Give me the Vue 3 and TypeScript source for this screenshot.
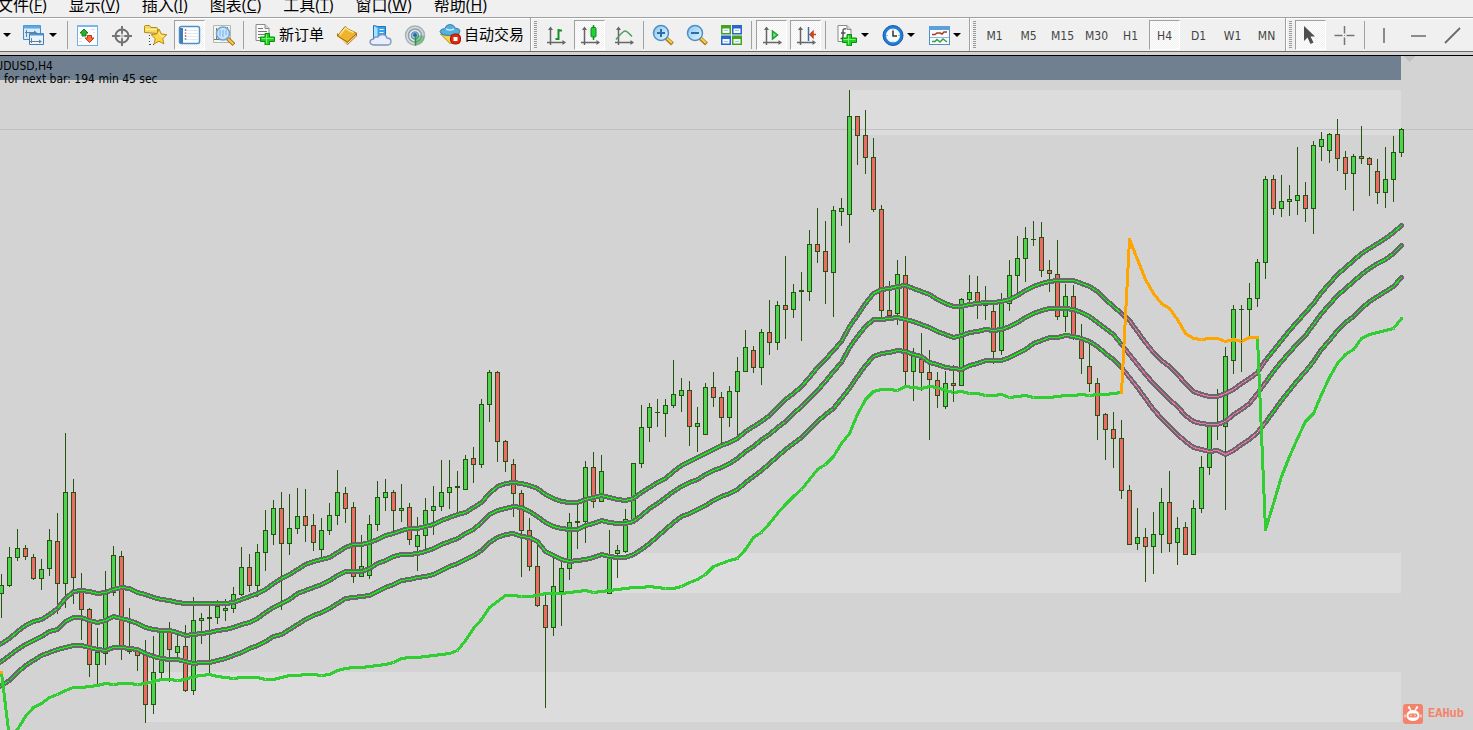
<script setup lang="ts">
interface Candle {
  x: number
  high: number
  top: number
  bottom: number
  low: number
  up: boolean
}

interface Tool {
  icon: string
  label: string
  text?: string
  pressed?: boolean
}

const STEP = 8
const START = 1

const menus = [
  { name: '文件', key: 'F' },
  { name: '显示', key: 'V' },
  { name: '插入', key: 'I' },
  { name: '图表', key: 'C' },
  { name: '工具', key: 'T' },
  { name: '窗口', key: 'W' },
  { name: '帮助', key: 'H' },
]

const axes =
  '<path d="M6.500 4v17M3 18.500h17" stroke="#666" stroke-width="1.500" fill="none"/><path d="M6.500 2.500l2.500 3.500h-5zM22 18.500l-3.500 -2.500v5z" fill="#666"/>'
const plus =
  '<path d="M11 10.500h4.500v3.500h5v4.500h-5v3.500h-4.500v-3.500h-4.500v-4.500h4.500z" fill="#1fd11f" stroke="#0b8a12"/><path d="M12.500 11.500v9M7.500 15.500h12" stroke="#7df070"/>'
const page =
  '<path d="M2 1.500h9l4 4v12h-13z" fill="#fafafa" stroke="#8a8a8a"/><path d="M11 1.500v4h4" fill="#d8d8d8" stroke="#8a8a8a"/>'
const lens =
  '<path d="M14 14l6.500 6" stroke="#a8791c" stroke-width="4"/><path d="M14.500 14l5.500 5" stroke="#f5cf4a" stroke-width="2"/><circle cx="9" cy="9" r="7.500" fill="url(#lensFill)" stroke="#4c8fc4" stroke-width="1.500"/>'

const icons: Record<string, string> = {
  profiles:
    '<path d="M1.500 1.500h17v14h-17z" fill="#d9ecfb" stroke="#4a8cc4"/><path d="M1.500 1.500h17v3h-17z" fill="#5ea7e2"/><path d="M7.500 9.500h14v11h-14z" fill="#eaf5fe" stroke="#3d7fb9"/><path d="M7.500 9.500h14v2h-14z" fill="#4d97d6"/><path d="M4.500 6v7M3 8.500h11M9.500 14v5M8 17.500h11" stroke="#6a7f92" fill="none"/><path d="M12 6.500l3 2l-3 2zM17 15.500l3 2l-3 2z" fill="#6a7f92"/>',
  market:
    '<rect x="1.500" y="1.500" width="20" height="20" fill="#fdfeff" stroke="#6fb1e8"/><path d="M1 2h21" stroke="#77b8ee" stroke-width="2"/><path d="M8 5l4 4h-2v3h-4v-3h-2z" fill="#27b227" stroke="#167a18"/><path d="M11.500 11.500h4v2.500h2.500l-4.500 4.500l-4.500 -4.500h2.500z" fill="#ff6a3c" stroke="#c23a12"/><path d="M3 14.500h3M3 17.500h3M15 5.500h4M17 8.500h2" stroke="#d5dde5"/>',
  cross:
    '<circle cx="12" cy="12" r="6.500" fill="none" stroke="#6c6c6c" stroke-width="2"/><path d="M12 2v8M12 14v8M2 12h8M14 12h8" stroke="#757575" stroke-width="2"/><path d="M12 9v6M9 12h6" stroke="#aaa"/>',
  favorites:
    '<path d="M.500 8.500v-6q0 -1 1 -1h4l1.500 2h5.500q1 0 1 1v5z" fill="#f7d95c" stroke="#b08a1c"/><path d="M1.500 5.500h11" stroke="#fff3b0"/><path d="M5.500 11v10M6 20.500h5" stroke="#444" stroke-dasharray="1 2"/><path d="M15 5l2.400 5l5.400 .7l-4 3.800l1 5.400l-4.800 -2.700l-4.800 2.700l1 -5.400l-4 -3.800l5.400 -.7z" fill="#fbd64a" stroke="#b98a18"/><path d="M15 8.500l1.500 3.500l3.500 .5" fill="none" stroke="#fff2a6"/>',
  navigator:
    '<rect x="1.500" y="2.500" width="20" height="17" rx="2" fill="#fff" stroke="#4f8fc8" stroke-width="1.500"/><path d="M2 4h3v15h-3z" fill="#3f7cb5"/><path d="M8 6.500h12M8 9.500h12M8 12.500h12M8 15.500h12" stroke="#e1e9f4"/><path d="M7.500 5.500v1M7.500 11.500v1M7.500 14.500v1" stroke="#222" stroke-width="1.500"/><path d="M7.500 8.500v1" stroke="#d33" stroke-width="1.500"/>',
  tester:
    '<path d="M1.500 1.500h17v17h-17z" fill="#f4f4f0" stroke="#b9b6ac"/><path d="M4.500 4v11M2 15.500h12M15.500 3v9" stroke="#777"/><path d="M15 14l7 6.500" stroke="#a8791c" stroke-width="4"/><path d="M16 15l5.500 5" stroke="#f5c84a" stroke-width="2"/><circle cx="11" cy="9.500" r="6.500" fill="#c5e3fa" stroke="#6fa6d6" stroke-width="1.500"/><path d="M8 12v-6M11 13v-7M14 11v-5" stroke="#7eaedb"/>',
  order: page + '<path d="M4 5.500h5M4 8.500h9M4 11.500h7M4 14.500h4" stroke="#777"/>' + plus,
  book:
    '<path d="M2 12l10.500 9l9.500 -9v-4l-9 9l-11 -8z" fill="#b8780f"/><path d="M2.500 12l7.500 -9.500q3 3 6 4t5.500 3l-9 8.500z" fill="#eeb42e" stroke="#a56e10"/><path d="M4.500 11l6 -7q4 3.500 8 4.500" fill="none" stroke="#ffe994" stroke-width="1.500"/><path d="M3 13.500l9.500 6l8.500 -8" fill="none" stroke="#fff4cc"/>',
  cloud:
    '<path d="M4.500 1.500l4 1h8v12h-12z" fill="#37a4ee" stroke="#1c75b8"/><path d="M5 2l3.500 2v9l-3.500 1z" fill="#aee0ff"/><path d="M10.500 5.500h4M10.500 8.500h4" stroke="#fff"/><path d="M5 21h13q4 0 4 -3.500t-4 -3.500q-1 -3.500 -4.500 -3.500t-4.500 2.500q-4 -.5 -4.500 2q-3.500 .5 -3.500 3t4 3z" fill="#e8eefb" stroke="#7f93bb" stroke-width="1.300"/>',
  signal:
    '<circle cx="12" cy="11.500" r="9.500" fill="#d9dde0" stroke="#a7b2b4" stroke-width="1.500"/><circle cx="12" cy="11.500" r="6.500" fill="#e7ecee" stroke="#8da2ab" stroke-width="1.500"/><circle cx="12" cy="11.500" r="3.500" fill="#c6d8e6" stroke="#6693ba" stroke-width="1.500"/><path d="M12 11.500v9.500q9 -1 9.500 -9q-3 -1 -9.500 -.5z" fill="#36a946" opacity=".5"/><path d="M12.500 11v10.500" stroke="#2a9336" stroke-width="1.500"/><circle cx="12" cy="11" r="2" fill="#2869a8"/>',
  auto:
    '<path d="M1.500 11q9 3 19 -1l-9 11z" fill="#f8d34c" stroke="#b58b1c"/><path d="M1 8.500q1 4 10 4t10 -4.500q0 -2.500 -5 -3q-1 -3.500 -5 -3.500t-5 4q-5 .5 -5 3z" fill="#56b0dc" stroke="#2f83b1"/><path d="M7 6q4 2 8 0" fill="none" stroke="#c7ecfc" stroke-width="1.500"/><rect x="11.500" y="11" width="10" height="10" rx="4" fill="#dc2a14" stroke="#a31405"/><rect x="14.500" y="14" width="4" height="4" fill="#fff"/>',
  bars: axes + '<path d="M14.500 5v11M14.500 6.500h3.500M11.500 15h3" stroke="#14922a" stroke-width="2" fill="none"/>',
  candles:
    axes + '<path d="M15.500 1v15" stroke="#0b8a1c" stroke-width="1.500"/><rect x="13" y="3.500" width="5" height="9.500" rx="1" fill="#22d03a" stroke="#0b8a1c"/>',
  line: axes + '<path d="M4 15.500q7 -8.500 9 -8.500t7 5.500" stroke="#4b9f58" stroke-width="1.500" fill="none"/>',
  zoomin: lens + '<path d="M9 5v8M5 9h8" stroke="#2a70a6" stroke-width="2"/>',
  zoomout: lens + '<path d="M5 9h8" stroke="#2a70a6" stroke-width="2"/>',
  tiles:
    '<path d="M1 1h10v9.500h-10zM12 11.500h10v9.500h-10z" fill="#43a41c"/><path d="M12 1h10v9.500h-10zM1 11.500h10v9.500h-10z" fill="#2765d0"/><path d="M2.500 4.500h7v4.500h-7zM13.500 4.500h7v4.500h-7zM2.500 15h7v4.500h-7zM13.500 15h7v4.500h-7z" fill="#f6fbff"/><path d="M4 6.500h4M15 6.500h4M4 17.500h4M15 17.500h4" stroke="#a8c5dd"/>',
  scroll: axes + '<path d="M12.500 7l5 4l-5 4z" fill="#7ee08a" stroke="#17a02e" stroke-width="1.500"/>',
  shift:
    axes + '<path d="M14.500 3v14" stroke="#2f75aa" stroke-width="1.500"/><path d="M16 10.500h6M19 7.500l-3 3l3 3z" stroke="#c8441a" stroke-width="1.500" fill="#e0562a"/>',
  indicator:
    page + '<path d="M10 5q-3 -1 -3 2v5q0 3 -2.500 2.500M5 9h4.500" stroke="#555" stroke-width="1.500" fill="none"/>' + plus,
  clock:
    '<circle cx="11" cy="11.500" r="8.500" fill="#f6fafd" stroke="#1f7fd8" stroke-width="3"/><circle cx="11" cy="11.500" r="10" fill="none" stroke="#1459a8"/><path d="M11 6.500v5.500h4" stroke="#333" stroke-width="1.500" fill="none"/><path d="M11 4.500v1M11 17.500v1M4.500 11.500h1M16.500 11.500h1" stroke="#777"/>',
  template:
    '<rect x="1.500" y="2.500" width="20" height="18" fill="#f9fcff" stroke="#4a8fcb"/><path d="M1 2h21v4h-21z" fill="#5aa0dd"/><path d="M2 13.500h19" stroke="#8fb9dc"/><path d="M4 10.500h3l2 -1.500h3l2 1l2 -2h3" stroke="#a63a1c" stroke-width="1.500" fill="none"/><path d="M4 17.500h3l2 -2l3 2.500l3 -3l4 3" stroke="#3c9b45" stroke-width="1.500" fill="none"/>',
  cursor: '<path d="M5 2v15l3.500 -3.500l3 6.500l3 -1.500l-3 -6h4.500z" fill="#4e4e4e"/>',
  aim: '<path d="M11.500 2v7.500M11.500 13.500v7.500M1.500 11.500h8M13.500 11.500h8" stroke="#747474" stroke-width="1.500"/><path d="M11 11.500h1" stroke="#888"/>',
  vline: '<path d="M11 4v15" stroke="#6a6a6a" stroke-width="1.500"/>',
  hline: '<path d="M4 12h15" stroke="#6a6a6a" stroke-width="1.500"/>',
  trend: '<path d="M4 19l15 -15" stroke="#6a6a6a" stroke-width="1.800"/>',
}

const windowTools: Tool[] = [
  { icon: 'market', label: '市场报价' },
  { icon: 'cross', label: '数据窗口' },
  { icon: 'favorites', label: '导航' },
  { icon: 'navigator', label: '终端', pressed: true },
  { icon: 'tester', label: '策略测试' },
]
const tradeTools: Tool[] = [
  { icon: 'order', label: '新订单', text: '新订单' },
  { icon: 'book', label: '编辑器' },
  { icon: 'cloud', label: '云存储' },
  { icon: 'signal', label: '信号' },
  { icon: 'auto', label: '自动交易', text: '自动交易' },
]
const styleTools: Tool[] = [
  { icon: 'bars', label: '柱状图' },
  { icon: 'candles', label: '蜡烛图', pressed: true },
  { icon: 'line', label: '折线图' },
]
const zoomTools: Tool[] = [
  { icon: 'zoomin', label: '放大' },
  { icon: 'zoomout', label: '缩小' },
  { icon: 'tiles', label: '平铺窗口' },
]
const scrollTools: Tool[] = [
  { icon: 'scroll', label: '自动滚动', pressed: true },
  { icon: 'shift', label: '图表平移', pressed: true },
]
const dropTools: Tool[] = [
  { icon: 'indicator', label: '指标' },
  { icon: 'clock', label: '周期' },
  { icon: 'template', label: '模板' },
]
const pointerTools: Tool[] = [
  { icon: 'cursor', label: '光标', pressed: true },
  { icon: 'aim', label: '十字线' },
]
const lineTools: Tool[] = [
  { icon: 'vline', label: '垂直线' },
  { icon: 'hline', label: '水平线' },
  { icon: 'trend', label: '趋势线' },
]
const periods = ['M1', 'M5', 'M15', 'M30', 'H1', 'H4', 'D1', 'W1', 'MN']

// high, body top, body bottom, low, direction
const rows = `574 585 594 618 G;547 557 586 587 G;529 548 558 561 G;545 548 557 560 R;554 557 579 580 R;559 569 579 590 G;529 540 569 576 G;513 541 584 614 R;433 492 584 608 G;479 492 578 604 R
573 592 610 640 R;608 609 665 677 R;628 652 665 684 G;571 593 654 665 G;546 555 593 596 G;551 556 647 660 R;608 651 652 654 G;648 651 656 671 R;640 655 705 723 R;636 672 705 714 G
630 631 673 681 G;622 631 650 682 R;634 646 653 657 G;625 646 691 692 R;597 620 691 695 G;613 618 621 644 G;605 617 619 673 G;600 606 618 624 G;599 608 611 621 G;587 594 609 613 G
547 567 595 596 G;554 567 586 592 R;544 552 586 597 G;510 530 553 571 G;500 508 535 545 G;492 508 544 610 R;494 528 544 555 G;488 516 529 534 G;489 516 526 542 R;514 525 543 551 R
518 530 550 557 G;503 515 531 535 G;470 492 516 525 G;487 493 509 523 R;502 507 577 583 R;535 566 577 577 G;515 524 576 579 G;481 497 525 531 G;479 492 498 511 G;490 492 511 531 R
484 508 511 522 G;503 507 540 545 R;517 535 547 571 G;498 510 536 549 G;486 506 511 535 G;460 492 507 511 G;460 487 493 509 G;471 486 488 513 G;455 459 490 490 G;447 458 465 483 R
399 404 465 468 G;370 372 405 422 G;371 372 442 462 R;440 441 462 472 R;459 464 494 517 R;490 493 531 577 R;518 530 567 571 R;544 566 606 607 R;595 605 628 708 R;556 586 628 636 G
560 568 592 626 G;513 522 569 580 G;505 521 523 549 G;461 467 522 543 G;452 467 502 508 R;455 471 502 502 G;530 555 594 594 G;545 550 554 578 G;509 519 552 553 G;463 463 520 522 G
405 427 464 468 G;403 407 428 442 G;399 412 413 427 G;399 405 414 437 G;360 394 406 408 G;378 390 396 412 G;381 390 427 446 R;407 423 427 452 G;383 387 435 435 G;372 387 398 407 R
392 397 418 443 R;386 391 418 427 G;357 371 392 435 G;330 347 372 372 G;346 350 368 373 R;329 332 368 385 G;300 332 343 355 R;301 305 343 350 G;256 305 310 339 R;284 292 310 318 G
272 290 292 341 G;230 244 292 301 G;208 244 252 263 R;221 251 272 304 R;206 210 273 317 G;198 208 212 226 G;90 116 215 243 G;116 116 136 165 R;110 135 158 174 R;138 157 210 212 R
205 209 311 317 R;281 310 316 317 R;260 274 314 325 G;256 275 372 387 R;348 356 372 401 G;333 359 373 391 R;350 372 380 440 R;372 380 396 408 R;371 383 407 409 G;365 383 386 402 R
298 299 386 386 G;275 292 300 303 G;276 292 304 319 R;286 305 306 320 G;303 311 352 364 R;293 302 351 355 G;260 275 304 311 G;236 258 276 295 G;227 238 259 282 G;221 239 240 246 G
222 237 271 277 R;260 270 274 292 R;240 274 317 320 R;284 296 317 332 G;285 296 336 340 R;324 338 359 374 R;342 366 384 392 R;378 383 416 440 R;413 414 430 460 R;412 429 439 468 R
420 438 491 499 R;485 490 545 545 R;508 537 544 550 G;528 537 547 582 R;512 534 547 574 G;488 502 535 553 G;471 502 544 552 R;517 528 543 565 G;522 527 555 555 R;500 508 555 555 G
456 467 509 513 G;424 426 468 475 G;389 424 425 440 G;347 356 427 510 G;305 309 361 374 G;305 309 310 372 G;283 298 310 337 G;259 262 299 307 G;176 179 263 279 G;175 179 209 215 R
175 201 209 217 G;185 199 202 216 G;147 195 201 215 G;182 195 209 222 R;141 145 209 234 G;132 139 147 161 G;133 134 151 163 G;119 134 159 171 R;151 157 174 190 R;154 156 174 211 G
126 156 159 164 R;157 158 165 196 R;159 171 193 204 R;147 179 193 208 G;136 152 180 202 G;128 129 153 157 G`

const candles: Candle[] = rows.split(/[;\n]/).map((row, i) => {
  const p = row.split(' ')
  return { x: START + i * STEP, high: +p[0], top: +p[1], bottom: +p[2], low: +p[3], up: p[4] === 'G' }
})

const fast = [
  643, 638, 631, 625, 621, 619, 614, 608, 598, 591, 590, 591, 593, 592, 589, 587, 588, 592, 594, 597, 599, 600, 602, 603, 603, 603, 603, 603,
  603, 602, 599, 596, 593, 589, 583, 578, 574, 569, 564, 561, 559, 557, 552, 547, 544, 544, 542, 539, 535, 533, 530, 528, 528, 526, 524, 520,
  517, 514, 512, 507, 502, 493, 486, 483, 482, 483, 485, 488, 494, 498, 501, 502, 502, 499, 497, 495, 497, 499, 500, 498, 492, 487, 482, 478,
  471, 465, 461, 457, 453, 449, 445, 442, 438, 431, 426, 421, 415, 407, 399, 393, 386, 377, 367, 359, 350, 341, 326, 315, 303, 293, 289, 288,
  286, 285, 288, 291, 294, 299, 303, 306, 306, 304, 303, 302, 302, 301, 299, 295, 290, 286, 283, 281, 280, 280, 280, 283, 286, 291, 299, 306,
  313, 320, 331, 342, 352, 360, 366, 374, 383, 391, 394, 396, 396, 393, 389, 383, 378, 372, 360, 350, 340, 330, 321, 312, 303, 292, 283, 274,
  267, 260, 253, 248, 243, 238, 232, 225,
]
const middle = [
  661, 655, 649, 644, 640, 636, 631, 629, 621, 617, 617, 620, 622, 620, 616, 618, 620, 623, 627, 629, 630, 630, 632, 635, 634, 633, 632, 630,
  629, 627, 624, 622, 618, 612, 607, 603, 599, 593, 590, 587, 584, 580, 575, 571, 571, 571, 568, 563, 560, 556, 554, 554, 553, 551, 548, 544,
  541, 538, 533, 529, 522, 514, 510, 508, 506, 507, 511, 516, 522, 526, 528, 529, 529, 525, 523, 520, 522, 523, 523, 521, 515, 508, 503, 497,
  491, 486, 482, 479, 474, 470, 467, 463, 458, 451, 446, 439, 434, 427, 421, 413, 406, 398, 390, 381, 371, 362, 347, 336, 326, 319, 319, 318,
  317, 319, 321, 324, 327, 331, 334, 337, 335, 332, 331, 329, 330, 329, 326, 322, 317, 313, 310, 308, 308, 308, 309, 312, 316, 322, 328, 334,
  344, 354, 364, 374, 383, 391, 399, 406, 415, 421, 423, 424, 424, 421, 414, 409, 403, 393, 382, 371, 361, 352, 343, 335, 324, 313, 304, 295,
  288, 281, 274, 268, 263, 259, 253, 245,
]
const slow = [
  685, 680, 672, 665, 660, 655, 652, 649, 647, 645, 645, 647, 649, 650, 647, 647, 648, 649, 653, 656, 658, 659, 659, 661, 663, 662, 662, 660,
  658, 655, 652, 648, 645, 641, 636, 634, 629, 624, 619, 615, 612, 608, 603, 598, 597, 596, 595, 591, 587, 584, 580, 579, 577, 576, 574, 570,
  566, 563, 559, 555, 550, 542, 537, 534, 533, 536, 537, 541, 551, 555, 559, 561, 560, 559, 557, 554, 556, 557, 557, 554, 549, 543, 536, 529,
  522, 516, 513, 509, 505, 500, 496, 493, 489, 482, 476, 470, 463, 456, 449, 443, 437, 429, 421, 414, 408, 398, 388, 376, 365, 356, 353, 352,
  350, 351, 354, 356, 362, 364, 367, 368, 369, 365, 363, 360, 360, 360, 357, 353, 349, 343, 340, 337, 337, 335, 336, 338, 341, 346, 353, 359,
  367, 377, 387, 398, 409, 418, 426, 434, 441, 447, 449, 451, 450, 454, 450, 444, 439, 432, 422, 411, 400, 390, 380, 371, 361, 349, 340, 330,
  322, 316, 308, 301, 296, 291, 286, 277,
]
const stopEarly = [
  672, 738, 729, 716, 707, 703, 697, 694, 690, 687, 687, 686, 685, 683, 684, 683, 683, 684, 683, 681, 679, 679, 680, 679, 676, 675, 674, 676,
  677, 678, 677, 677, 677, 679, 679, 677, 675, 675, 674, 674, 675, 674, 670, 668, 667, 667, 666, 665, 664, 662, 658, 657, 657, 656, 655, 654,
  653, 650, 640, 628, 619, 607, 601, 595, 595, 596, 596, 595, 593, 593, 593, 592, 591, 590, 592, 591, 590, 589, 588, 587, 587, 586, 587, 588,
  588, 586, 582, 579, 574, 566, 563, 560, 558, 549, 537, 532, 523, 513, 504, 496, 489, 479, 469, 464, 456, 443, 433, 414, 399, 391, 389, 389,
  390, 386, 387, 388, 386, 387, 390, 392, 391, 393, 393, 395, 395, 394, 397, 396, 395, 397, 397, 397, 396, 395, 395, 394, 395, 394, 394, 393,
  392,
]
const stopDown = [392, 239, 259, 279, 293, 303, 308, 319, 333, 338, 339, 338, 338, 341, 339, 341, 337, 337]
const stopLate = [337, 529, 503, 476, 456, 438, 421, 413, 394, 377, 363, 354, 349, 338, 334, 332, 330, 328, 318]

function points(values: number[], first = 0): string {
  return values.map((y, i) => `${START + (first + i) * STEP},${y}`).join(' ')
}

const averages = [fast, middle, slow].map((values) => ({
  all: `-7,${values[0] + 5} ` + points(values),
  falling: points(values.slice(140, 159), 140),
}))
const stopEarlyPoints = points(stopEarly)
const stopDownPoints = points(stopDown, 140)
const stopLatePoints = points(stopLate, 157)
</script>

<template>
  <div class="terminal">
    <svg class="defs" aria-hidden="true">
      <defs>
        <linearGradient id="lensFill" x1="0" y1="0" x2="1" y2="1">
          <stop offset="0" stop-color="#8cc8ef" />
          <stop offset="1" stop-color="#e2f4ff" />
        </linearGradient>
      </defs>
    </svg>
    <nav class="menu">
      <button v-for="m in menus" :key="m.key" type="button">{{ m.name }}(<u>{{ m.key }}</u>)</button>
    </nav>

    <div class="toolbar">
      <button type="button" class="tool stub" aria-label="新图表"><i class="caret"></i></button>
      <button type="button" class="tool profiles" aria-label="配置文件">
        <svg viewBox="0 0 23 22" v-html="icons.profiles"></svg><i class="caret"></i>
      </button>
      <span class="sep"></span>
      <button v-for="t in windowTools" :key="t.icon" type="button" class="tool" :class="{ pressed: t.pressed }" :aria-label="t.label">
        <svg viewBox="0 0 23 22" v-html="icons[t.icon]"></svg>
      </button>
      <span class="sep"></span>
      <button v-for="t in tradeTools" :key="t.icon" type="button" class="tool" :class="{ wide: t.text }" :aria-label="t.label">
        <svg viewBox="0 0 23 22" v-html="icons[t.icon]"></svg><span v-if="t.text">{{ t.text }}</span>
      </button>
      <span class="grip"></span>
      <button v-for="t in styleTools" :key="t.icon" type="button" class="tool" :class="{ pressed: t.pressed }" :aria-label="t.label">
        <svg viewBox="0 0 23 22" v-html="icons[t.icon]"></svg>
      </button>
      <span class="sep"></span>
      <button v-for="t in zoomTools" :key="t.icon" type="button" class="tool" :aria-label="t.label">
        <svg viewBox="0 0 23 22" v-html="icons[t.icon]"></svg>
      </button>
      <span class="sep"></span>
      <button v-for="t in scrollTools" :key="t.icon" type="button" class="tool pressed" :aria-label="t.label">
        <svg viewBox="0 0 23 22" v-html="icons[t.icon]"></svg>
      </button>
      <span class="sep"></span>
      <div class="drops">
        <button v-for="t in dropTools" :key="t.icon" type="button" class="tool drop" :aria-label="t.label">
          <svg viewBox="0 0 23 22" v-html="icons[t.icon]"></svg><i class="caret"></i>
        </button>
      </div>
      <span class="grip"></span>
      <button v-for="p in periods" :key="p" type="button" class="tool period" :class="{ pressed: p === 'H4' }">{{ p }}</button>
      <span class="grip"></span>
      <button v-for="t in pointerTools" :key="t.icon" type="button" class="tool" :class="{ pressed: t.pressed }" :aria-label="t.label">
        <svg viewBox="0 0 23 22" v-html="icons[t.icon]"></svg>
      </button>
      <span class="sep"></span>
      <button v-for="t in lineTools" :key="t.icon" type="button" class="tool" :aria-label="t.label">
        <svg viewBox="0 0 23 22" v-html="icons[t.icon]"></svg>
      </button>
    </div>

    <main class="chart">
      <svg class="plot" viewBox="0 56 1473 674" shape-rendering="crispEdges" role="img" aria-label="AUDUSD H4">
        <rect x="0" y="56" width="1401" height="24" fill="#708090" />
        <rect x="849" y="90" width="552" height="45" fill="#dcdcdc" />
        <rect x="609" y="553" width="792" height="40" fill="#dcdcdc" />
        <rect x="145" y="672" width="1256" height="50" fill="#dcdcdc" />
        <rect x="0" y="129" width="1473" height="1" fill="#c0c0c0" />
        <path d="M1403 56h13l-6.500 6z" fill="#c0c0c0" />
        <g v-for="c in candles" :key="c.x">
          <rect :x="c.x" :y="c.high" width="1" :height="c.low - c.high" fill="#24540f" />
          <rect :x="c.x - 2" :y="c.top" width="5" :height="c.bottom - c.top" fill="#24540f" />
          <rect
            v-if="c.bottom - c.top > 2"
            :x="c.x - 1"
            :y="c.top + 1"
            width="3"
            :height="c.bottom - c.top - 2"
            :fill="c.up ? '#4fd24f' : '#f06868'"
          />
        </g>
        <g fill="none" stroke-linejoin="round" stroke-linecap="round" transform="translate(0.5 0.5)">
          <template v-for="(a, i) in averages" :key="i">
            <polyline :points="a.all" stroke="#696969" stroke-width="5" />
            <polyline :points="a.all" stroke="#00ff00" stroke-width="1" />
            <polyline :points="a.falling" stroke="#696969" stroke-width="3" />
            <polyline :points="a.falling" stroke="#ff69b4" stroke-width="1" />
          </template>
          <polyline :points="stopEarlyPoints" stroke="#32cd32" stroke-width="3" />
          <polyline :points="stopLatePoints" stroke="#32cd32" stroke-width="3" />
          <polyline :points="stopDownPoints" stroke="#ffa500" stroke-width="3" />
          <path d="M-3 672h4" stroke="#ffa500" stroke-width="3" />
        </g>
      </svg>
      <div class="caption">
        <div class="symbol"><span>UDUSD,H4</span></div>
        <div class="timer">for next bar: 194 min 45 sec</div>
      </div>
      <div class="mark">
        <svg viewBox="0 0 20 20">
          <rect width="20" height="20" rx="3" fill="#f5836b" />
          <path d="M6 3l2 4M14 3l-2 4" stroke="#fff" stroke-width="1.500" />
          <circle cx="6" cy="3.500" r="1.200" fill="#fff" />
          <circle cx="14" cy="3.500" r="1.200" fill="#fff" />
          <ellipse cx="10" cy="11.500" rx="6.500" ry="5.500" fill="#fff" />
          <path d="M2 10.500v3M18 10.500v3" stroke="#fff" />
          <rect x="5.500" y="9.500" width="9" height="4" rx="2" fill="#f5836b" />
          <path d="M7.500 11.500h1M11.500 11.500h1" stroke="#fff" stroke-width="1.500" />
        </svg>
        <span>EAHub</span>
      </div>
    </main>
  </div>
</template>

<style>
body {
  background: #d3d3d3;
}
</style>

<style scoped>
.terminal {
  background: #d3d3d3;
  color: #000;
  font-family: "Open Sans", "Noto Sans CJK SC", sans-serif;
  overflow: hidden;
}
.defs {
  position: absolute;
  width: 0;
  height: 0;
}
button {
  margin: 0;
  padding: 0;
  border: 0;
  background: none;
  color: inherit;
  font: inherit;
}
.menu {
  display: flex;
  align-items: flex-end;
  gap: 22px;
  height: 17px;
  background: #f0f0f0;
  overflow: hidden;
}
.menu button {
  flex: none;
  font-size: 16px;
  line-height: 24px;
  white-space: nowrap;
}
.menu button:first-child {
  margin-left: -3px;
}
.menu u {
  text-underline-offset: 1px;
}
.toolbar {
  display: flex;
  align-items: center;
  gap: 3px;
  height: 31px;
  padding: 1px 0;
  background: #f0f0f0;
  border-top: 1px solid #a0a0a0;
  border-bottom: 1px solid #a0a0a0;
  box-shadow: inset 0 1px #fff;
  overflow: hidden;
}
.tool {
  box-sizing: border-box;
  flex: none;
  display: flex;
  align-items: center;
  justify-content: center;
  width: 31px;
  height: 30px;
  border: 1px solid transparent;
}
.tool svg {
  flex: none;
  width: 23px;
  height: 22px;
}
.tool.pressed {
  border-color: #a0a0a0 #fff #fff #a0a0a0;
  background: repeating-conic-gradient(#fff 0 25%, #f0f0f0 0 50%) 0 0 / 2px 2px;
}
.tool.wide {
  width: auto;
  min-width: 80px;
  justify-content: flex-start;
  gap: 2px;
  padding: 0 2px 2px 5px;
  font-size: 15px;
  line-height: 22px;
}
.tool.stub {
  width: 13px;
}
.tool.profiles {
  width: 47px;
  gap: 4px;
}
.tool.drop {
  width: 44px;
  justify-content: flex-start;
  gap: 2px;
  padding-left: 5px;
}
.drops {
  display: flex;
  gap: 2px;
}
.caret {
  flex: none;
  width: 0;
  height: 0;
  border: 4px solid transparent;
  border-top-color: #000;
  border-bottom: 0;
}
.sep {
  flex: none;
  box-sizing: border-box;
  width: 3px;
  height: 28px;
  border: solid #f0f0f0;
  border-width: 0 1px;
  background: #a0a0a0;
}
.grip {
  flex: none;
  box-sizing: border-box;
  width: 7px;
  height: 33px;
  padding: 3px 0 3px 3px;
  border-left: 1px solid #a0a0a0;
  box-shadow: inset 1px 0 #fff;
  background: repeating-linear-gradient(#999 0 1px, #f0f0f0 1px 2px) content-box;
}
.period {
  padding-top: 2px;
  font-family: "DejaVu Sans Condensed", "DejaVu Sans", sans-serif;
  font-size: 12px;
  color: #444;
}
.chart {
  position: relative;
  margin-top: 3px;
  border-top: 1px solid #000;
  box-shadow: 0 -3px #d3d3d3, 0 -4px #696969;
}
.plot {
  display: block;
  width: 100%;
}
.caption {
  position: absolute;
  top: 4px;
  left: 0;
  font-family: "DejaVu Sans Condensed", "DejaVu Sans", sans-serif;
  font-size: 12px;
  line-height: 13px;
}
.symbol {
  display: flex;
  justify-content: flex-end;
  width: 53px;
  overflow: hidden;
}
.timer {
  padding-left: 4px;
  white-space: nowrap;
}
.mark {
  position: absolute;
  right: 9px;
  bottom: 5px;
  display: flex;
  align-items: center;
  gap: 5px;
  color: #f5836b;
  font: bold 12px/22px "Liberation Mono", monospace;
}
.mark svg {
  width: 20px;
  height: 20px;
}
</style>
